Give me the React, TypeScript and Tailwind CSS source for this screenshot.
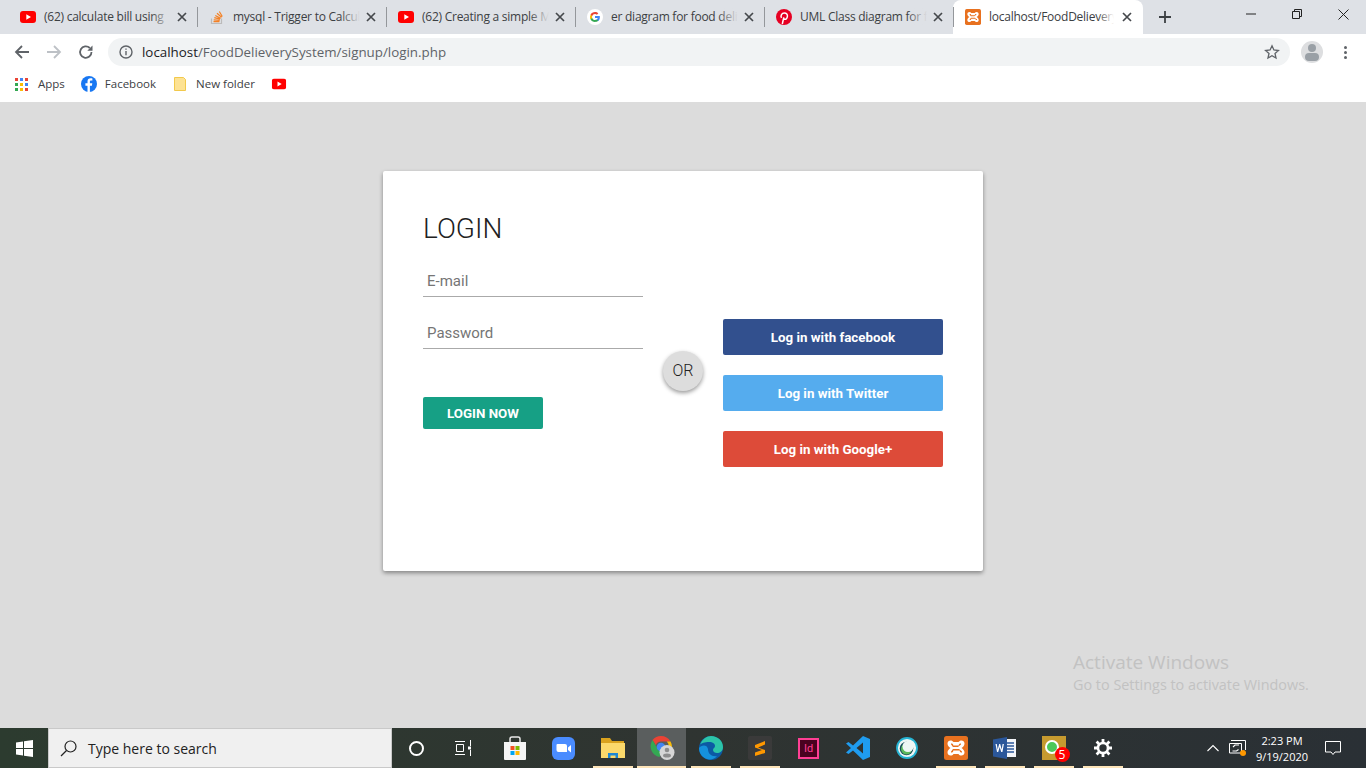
import React from 'react';

const uiFont = { fontFamily: '"Open Sans", "Noto Sans", sans-serif' };

const YoutubeIcon: React.FC = () => (
    <svg width="16" height="12" viewBox="0 0 16 12">
        <rect width="16" height="12" rx="3" fill="#f00" />
        <path d="M6.300 3.200 11 6l-4.700 2.800z" fill="#fff" />
    </svg>
);

const StackIcon: React.FC = () => (
    <svg width="16" height="16" viewBox="0 0 16 16" fill="none">
        <path d="M2.500 9.500v5h10v-5" stroke="#bcbbbb" strokeWidth="1.200" />
        <path d="M4.500 12.700h6M4.700 10.800l6 .6M5.300 8.700l5.800 1.500M6.300 6.500l5.300 2.900M8 4.300l4.600 4M10.300 2.500l3 5" stroke="#f48024" strokeWidth="1.200" />
    </svg>
);

const GoogleIcon: React.FC = () => (
    <svg width="16" height="16" viewBox="0 0 48 48">
        <circle cx="24" cy="24" r="24" fill="#fff" />
        <path d="M38.600 24.500c0-1.100-.1-2.200-.3-3.200H24v6h8.200c-.4 1.900-1.400 3.500-3 4.600v3.800h4.800c2.900-2.600 4.600-6.500 4.600-11.200z" fill="#4285f4" />
        <path d="M24 39c4 0 7.400-1.300 9.900-3.600l-4.800-3.800c-1.300.9-3 1.400-5.100 1.400-3.900 0-7.200-2.600-8.400-6.200h-5v3.900C13.100 35.700 18.200 39 24 39z" fill="#34a853" />
        <path d="M15.600 26.800a9 9 0 0 1 0-5.700v-3.900h-5a15 15 0 0 0 0 13.500z" fill="#fbbc05" />
        <path d="M24 15c2.200 0 4.200.8 5.700 2.200l4.300-4.300C31.400 10.500 28 9 24 9c-5.800 0-10.900 3.300-13.400 8.200l5 3.900C16.800 17.600 20.100 15 24 15z" fill="#ea4335" />
    </svg>
);

const PinterestIcon: React.FC = () => (
    <svg width="16" height="16" viewBox="0 0 16 16">
        <circle cx="8" cy="8" r="8" fill="#e60023" />
        <path d="M6.300 15 7.800 8.300M5.500 8.800C4.200 6.500 5.800 4 8.300 4c2.200 0 3.400 1.500 3.100 3.500-.3 1.900-1.500 3-2.700 2.800-.7-.1-1.100-.6-1.200-1" stroke="#fff" strokeWidth="1.500" fill="none" />
    </svg>
);

const XamppIcon: React.FC<{ size: number }> = ({ size }) => (
    <svg width={size} height={size} viewBox="0 0 24 24">
        <rect width="24" height="24" rx="2.500" fill="#e8711f" />
        <path
            d="M3.500 7.500C3.500 4 8 3.500 9.500 6h5C16 3.500 20.500 4 20.500 7.500c0 2-1.500 3.500-3 4.500 1.500 1 3 2.500 3 4.500 0 3.500-4.500 4-6 1.500h-5C8 20.500 3.500 20 3.500 16.500c0-2 1.500-3.500 3-4.500-1.500-1-3-2.500-3-4.500z"
            fill="#fff"
        />
        <path d="M7 7.500h.8c1 0 1.500 1 1.500 2h5.400c0-1 .5-2 1.500-2h.8v1c-1 .8-2 1.500-3 2.500H9c-1-1-1-1.700-2-2.500zM7 15.500c1-.8 1-1.500 2-2.500h6c1 1 2 1.700 3 2.500v1h-.8c-1 0-1.500-1-1.500-2H9.300c0 1-.5 2-1.500 2H7z" fill="#e8711f" />
    </svg>
);

const tabs = [
    { title: '(62) calculate bill using', icon: <YoutubeIcon /> },
    { title: 'mysql - Trigger to Calculate', icon: <StackIcon /> },
    { title: '(62) Creating a simple MVC', icon: <YoutubeIcon /> },
    { title: 'er diagram for food delivery', icon: <GoogleIcon /> },
    { title: 'UML Class diagram for food', icon: <PinterestIcon /> },
];

const CloseIcon: React.FC = () => (
    <svg width="10" height="10" viewBox="0 0 10 10" className="shrink-0">
        <path d="M1 1l8 8M9 1 1 9" stroke="#45484c" strokeWidth="1.700" />
    </svg>
);

const TabStrip: React.FC = () => (
    <div className="flex h-[34px] bg-[#dee1e6] pl-2 shrink-0">
        {tabs.map((tab) => (
            <div key={tab.title} className="flex items-center w-[189px] pl-3 pr-[10px] relative">
                <span className="w-4 h-4 flex items-center justify-center shrink-0">{tab.icon}</span>
                <div className="relative ml-2 w-[127px] overflow-hidden whitespace-nowrap text-[12px] tracking-[-0.25px] text-[#3c4043]">
                    {tab.title}
                    <div className="absolute top-0 right-0 h-full w-5 bg-gradient-to-r from-transparent to-[#dee1e6]" />
                </div>
                <span className="ml-auto"><CloseIcon /></span>
                <div className="absolute right-[-1px] top-[7px] h-[20px] w-px bg-[#94979b]" />
            </div>
        ))}
        <div className="flex items-center w-[190px] pl-3 pr-[11px] bg-white rounded-t-lg">
            <span className="w-4 h-4 shrink-0"><XamppIcon size={16} /></span>
            <div className="relative ml-2 w-[125px] overflow-hidden whitespace-nowrap text-[12px] tracking-[-0.25px] text-[#3c4043]">
                localhost/FoodDelievery
                <div className="absolute top-0 right-0 h-full w-4 bg-gradient-to-r from-transparent to-white" />
            </div>
            <span className="ml-auto"><CloseIcon /></span>
        </div>
        <div className="flex items-center ml-4">
            <svg width="12" height="12" viewBox="0 0 12 12"><path d="M6 0v12M0 6h12" stroke="#3c4043" strokeWidth="1.800" /></svg>
        </div>
        <div className="ml-auto flex h-[28px] items-center">
            <div className="w-[46px] flex justify-center">
                <svg width="10" height="10" viewBox="0 0 10 10"><path d="M0 5h10" stroke="#222" strokeWidth="1" /></svg>
            </div>
            <div className="w-[46px] flex justify-center">
                <svg width="10" height="10" viewBox="0 0 10 10" fill="none"><path d="M.5 2.500h7v7h-7zM2.500 2.500v-2h7v7h-2" stroke="#222" /></svg>
            </div>
            <div className="w-[46px] flex justify-center">
                <svg width="11" height="11" viewBox="0 0 11 11"><path d="M.5.500l10 10M10.500.500l-10 10" stroke="#222" /></svg>
            </div>
        </div>
    </div>
);

const Toolbar: React.FC = () => (
    <div className="flex items-center h-[34px] pt-[2px] bg-white shrink-0">
        <div className="w-[44px] flex justify-center">
            <svg width="16" height="16" viewBox="0 0 16 16" fill="none"><path d="M15 8H2M8 2 2 8l6 6" stroke="#5f6368" strokeWidth="1.800" /></svg>
        </div>
        <div className="w-[20px] flex justify-center">
            <svg width="16" height="16" viewBox="0 0 16 16" fill="none"><path d="M1 8h13M8 2l6 6-6 6" stroke="#bdc1c6" strokeWidth="1.800" /></svg>
        </div>
        <div className="w-[44px] flex justify-center">
            <svg width="16" height="16" viewBox="0 0 16 16" fill="none">
                <path d="M13.500 8A5.700 5.700 0 1 1 11.800 4" stroke="#5f6368" strokeWidth="1.800" />
                <path d="M14.500 1.500v5.200H9.300z" fill="#5f6368" />
            </svg>
        </div>
        <div className="flex items-center w-[1182px] h-[28px] rounded-full bg-[#f1f3f4] pl-[11px]">
            <svg width="14" height="14" viewBox="0 0 14 14" fill="none">
                <circle cx="7" cy="7" r="6" stroke="#5f6368" strokeWidth="1.400" />
                <path d="M7 6v4.200M7 3.500v1.300" stroke="#5f6368" strokeWidth="1.400" />
            </svg>
            <div className="ml-[9px] text-[13.350px] text-[#5f6368] whitespace-nowrap">
                <span className="text-[#202124]">localhost</span>/FoodDelieverySystem/signup/login.php
            </div>
            <svg width="16" height="16" viewBox="0 0 16 16" fill="none" className="ml-auto mr-[10px]">
                <path d="M8 1.800l1.900 4.200 4.500.5-3.400 3 1 4.500L8 11.700 4 14l1-4.500-3.400-3 4.500-.5z" stroke="#5f6368" strokeWidth="1.300" />
            </svg>
        </div>
        <div className="ml-[11px] w-[22px] h-[22px] rounded-full bg-[#dddee0] overflow-hidden flex flex-col items-center">
            <div className="w-[8px] h-[8px] rounded-full bg-[#9aa0a6] mt-[3px]" />
            <div className="w-[14px] h-[8px] rounded-full bg-[#9aa0a6] mt-px" />
        </div>
        <div className="ml-[21px] flex flex-col gap-[2px]">
            <div className="w-[3px] h-[3px] rounded-full bg-[#5f6368]" />
            <div className="w-[3px] h-[3px] rounded-full bg-[#5f6368]" />
            <div className="w-[3px] h-[3px] rounded-full bg-[#5f6368]" />
        </div>
    </div>
);

const appsColors = ['#ea4335', '#4285f4', '#ea4335', '#34a853', '#fbbc05', '#4285f4', '#34a853', '#fbbc05', '#ea4335'];

const BookmarksBar: React.FC = () => (
    <div className="flex items-center h-[34px] pb-[2px] bg-white text-[11.500px] text-[#3c4043] shrink-0 pl-[15px]">
        <div className="grid grid-cols-3 gap-[2px] w-[13px]">
            {appsColors.map((c, i) => (
                <div key={i} className="w-[3px] h-[3px]" style={{ backgroundColor: c }} />
            ))}
        </div>
        <span className="ml-[10px]">Apps</span>
        <svg width="16" height="16" viewBox="0 0 16 16" className="ml-4">
            <circle cx="8" cy="8" r="8" fill="#1877f2" />
            <path d="M8.900 16V9.800h2l.4-2.500H8.900V5.900c0-.8.300-1.300 1.300-1.300h1.200V2.400c-.4-.1-1.100-.2-1.800-.2-1.900 0-3.100 1.100-3.100 3.200v1.900H4.400v2.500h2.100V16z" fill="#fff" />
        </svg>
        <span className="ml-2">Facebook</span>
        <svg width="12" height="14" viewBox="0 0 12 14" className="ml-[18px]">
            <path d="M.5.500h9l2 2v11H.5z" fill="#fde293" stroke="#f2c94c" />
        </svg>
        <span className="ml-[10px]">New folder</span>
        <span className="ml-4 scale-90"><YoutubeIcon /></span>
    </div>
);

const socialButtons = [
    { label: 'Log in with facebook', color: 'bg-[#32508e]' },
    { label: 'Log in with Twitter', color: 'bg-[#55acee]' },
    { label: 'Log in with Google+', color: 'bg-[#dd4b39]' },
];

const LoginCard: React.FC = () => (
    <div
        className="relative mx-auto mt-[69px] w-[600px] h-[400px] bg-white rounded-[2px] shadow-[0_2px_4px_rgba(0,0,0,0.4)] flex pl-10 pt-[41px]"
        style={{ fontFamily: 'Roboto, sans-serif' }}
    >
        <div className="w-[220px]">
            <h1 className="text-[28px] leading-[34px] font-light text-[#212121]">LOGIN</h1>
            <div className="mt-[17px] h-[34px] border-b border-[#aaaaaa] px-1 text-[15px] leading-[36px] text-[#757575]">E-mail</div>
            <div className="mt-[18px] h-[34px] border-b border-[#aaaaaa] px-1 text-[15px] leading-[36px] text-[#757575]">Password</div>
            <button className="mt-[48px] w-[120px] h-[32px] pt-[2px] bg-[#16a085] rounded-[2px] text-white text-[13.330px] font-bold">LOGIN NOW</button>
        </div>
        <div className="w-[80px] flex justify-center pt-[139px]">
            <div className="w-10 h-10 rounded-full bg-[#dddddd] shadow-[0_2px_4px_rgba(0,0,0,0.4)] flex items-center justify-center text-[16px] font-light text-[#212121]">OR</div>
        </div>
        <div className="w-[220px] pt-[107px] flex flex-col gap-5">
            {socialButtons.map((b) => (
                <button key={b.label} className={`h-9 pt-[2px] rounded-[2px] text-white text-[13.330px] font-bold ${b.color}`}>{b.label}</button>
            ))}
        </div>
    </div>
);

const ChromeIcon = () => (
    <svg width="26" height="26" viewBox="0 0 26 26">
        <path d="M12 1a11 11 0 0 1 9.500 5.500H12a5.500 5.500 0 0 0-5.200 3.700L3.500 5A11 11 0 0 1 12 1z" fill="#ea4335" />
        <path d="M21.500 6.500A11 11 0 0 1 13 23l4.700-8a5.500 5.500 0 0 0 0-8.500z" fill="#fbbc05" />
        <path d="M3.500 5 8 12.700a5.500 5.500 0 0 0 5 3.800L10.500 22A11 11 0 0 1 3.500 5z" fill="#34a853" />
        <circle cx="12" cy="12" r="4.300" fill="#4285f4" />
        <circle cx="18" cy="17.500" r="7.500" fill="#d6d6d6" />
        <circle cx="18" cy="15" r="2.300" fill="#8d8d8d" />
        <ellipse cx="18" cy="20.500" rx="4" ry="2" fill="#8d8d8d" />
    </svg>
);

const taskIcons: { key: string; icon: React.ReactNode; active?: boolean; open?: boolean }[] = [
    {
        key: 'cortana',
        icon: <div className="w-[15px] h-[15px] rounded-full border-2 border-white" />,
    },
    {
        key: 'taskview',
        icon: (
            <svg width="17" height="16" viewBox="0 0 17 16" fill="none" stroke="#fff" className="mr-[4px]">
                <path d="M0 1.500h10M0 14.500h10M1.500 4.500h7v7h-7zM15.500 0v6M15.500 10v6" />
                <path d="M13 6.500h3v3h-3z" fill="#fff" stroke="none" />
            </svg>
        ),
    },
    {
        key: 'store',
        icon: (
            <svg width="24" height="25" viewBox="0 0 24 25">
                <path d="M7 6V3a2 2 0 0 1 2-2h6a2 2 0 0 1 2 2v3" fill="none" stroke="#e8e8e8" strokeWidth="1.500" />
                <path d="M1 6h22v17a1 1 0 0 1-1 1H2a1 1 0 0 1-1-1z" fill="#f5f5f5" />
                <rect x="7.500" y="10" width="4" height="4" fill="#f25022" />
                <rect x="12.500" y="10" width="4" height="4" fill="#7fba00" />
                <rect x="7.500" y="15" width="4" height="4" fill="#00a4ef" />
                <rect x="12.500" y="15" width="4" height="4" fill="#ffb900" />
            </svg>
        ),
    },
    {
        key: 'zoom',
        icon: (
            <svg width="23" height="23" viewBox="0 0 23 23">
                <rect width="23" height="23" rx="6" fill="#4a8cff" />
                <path d="M4.500 8a1 1 0 0 1 1-1h7.500a2 2 0 0 1 2 2v6h-8.500a2 2 0 0 1-2-2z" fill="#fff" />
                <path d="M16 10.500 19 8v7.500l-3-2.500z" fill="#fff" />
            </svg>
        ),
    },
    {
        key: 'explorer',
        open: true,
        icon: (
            <svg width="24" height="22" viewBox="0 0 24 22">
                <path d="M0 1h9l2 3h12v16H0z" fill="#d9a21e" />
                <path d="M0 6h24v15H0z" fill="#fbd96b" />
                <path d="M7 16h10v5h-2.500v-2.500h-5V21H7z" fill="#1e88d2" />
            </svg>
        ),
    },
    { key: 'chrome', active: true, open: true, icon: <ChromeIcon /> },
    {
        key: 'edge',
        open: true,
        icon: (
            <svg width="24" height="24" viewBox="0 0 24 24">
                <circle cx="12" cy="12" r="12" fill="#0c59a4" />
                <path d="M1 9C3 3 8 0 12 0c7 0 12 5 12 11 0 4-3 6-6 6-2 0-4-1-4-3 0-2 2-2 2-4s-2-4-6-4c-4 0-8 1-9 3z" fill="#2cc4a8" />
                <path d="M9 13c0 5 4 8 9 7-2 2.500-5 4-8 3.500C4 22.500 0 18 0 12c2-3 8-4 9 1z" fill="#1591dc" />
            </svg>
        ),
    },
    {
        key: 'sublime',
        open: true,
        icon: (
            <div className="w-6 h-6 rounded-[2px] bg-[#3a3a3a] flex items-center justify-center">
                <svg width="12" height="16" viewBox="0 0 12 16"><path d="M1 5l10-4v3.500L4 7.500l7 2.500v3L1 16v-3.500l7-2.500-7-2.500z" fill="#ff9800" /></svg>
            </div>
        ),
    },
    {
        key: 'indesign',
        icon: (
            <div className="w-[21px] h-[21px] border-2 border-[#ff3f94] bg-[#49021f] flex items-center justify-center text-[11px] leading-none text-[#ff3f94]" style={{ fontFamily: 'Roboto, sans-serif' }}>Id</div>
        ),
    },
    {
        key: 'vscode',
        icon: (
            <svg width="24" height="24" viewBox="0 0 24 24">
                <path d="M17 0 24 3v18l-7 3L7 14.500 2.500 18 0 16.500 5 12 0 7.500 2.500 6 7 9.500zM17 6.500 10.500 12l6.500 5.500z" fill="#1f9cf0" />
            </svg>
        ),
    },
    {
        key: 'webex',
        icon: (
            <svg width="22" height="22" viewBox="0 0 22 22">
                <circle cx="11" cy="11" r="10" fill="#eef6f5" stroke="#25b4d4" strokeWidth="1.800" />
                <circle cx="10.500" cy="11.500" r="6.800" fill="#16495a" />
                <circle cx="10.500" cy="12" r="5.500" fill="#5cb85c" />
                <circle cx="12" cy="9.500" r="5.500" fill="#eef6f5" />
            </svg>
        ),
    },
    { key: 'xampp', open: true, icon: <XamppIcon size={24} /> },
    {
        key: 'word',
        open: true,
        icon: (
            <svg width="23" height="22" viewBox="0 0 23 22">
                <rect x="8" y="2" width="15" height="18" fill="#f3f5f9" />
                <path d="M14 6h7M14 9h7M14 12h7M14 15h7" stroke="#2b579a" strokeWidth="1.500" />
                <path d="M0 2.500 14 0v22L0 19.500z" fill="#2b579a" />
                <path d="M2.500 7 4 15h1.200l1.500-5 1.500 5h1.200l1.500-8h-1.300l-.9 5.500L7.200 7H6.200l-1.500 5.500L3.800 7z" fill="#fff" />
            </svg>
        ),
    },
    {
        key: 'whatsapp',
        open: true,
        icon: (
            <div className="relative w-6 h-6 bg-[#c69a2f] flex items-center justify-center">
                <div className="w-[14px] h-[14px] rounded-full bg-[#4cc85a] border-2 border-white mr-[4px] mb-[2px]" />
                <div className="absolute right-[-4px] bottom-[-2px] w-[15px] h-[15px] rounded-full bg-[#f00] text-white text-[12px] leading-[15px] text-center">5</div>
            </div>
        ),
    },
    {
        key: 'settings',
        open: true,
        icon: (
            <svg width="18" height="18" viewBox="0 0 18 18" fill="none">
                <circle cx="9" cy="9" r="5" stroke="#fff" strokeWidth="2.600" />
                <path d="M9 0v4M9 14v4M0 9h4M14 9h4M2.600 2.600l2.800 2.800M12.600 12.600l2.800 2.800M2.600 15.400l2.800-2.800M12.600 5.400l2.800-2.800" stroke="#fff" strokeWidth="2.800" />
            </svg>
        ),
    },
];

const Taskbar: React.FC = () => (
    <div className="flex h-10 shrink-0 text-white bg-gradient-to-r from-[#2c3b2f] via-[#2f3431] to-[#2a3035]">
        <div className="w-[48px] flex items-center justify-center">
            <svg width="17" height="17" viewBox="0 0 17 17" fill="#fff">
                <path d="M0 2.500 7 1.500v6.500H0zM8 1.300 17 0v8H8zM0 9h7v6.500l-7-1zM8 9h9v8l-9-1.300z" />
            </svg>
        </div>
        <div className="w-[344px] bg-[#f0f0f0] border border-[#c9c9c9] flex items-center pl-[11px] text-[14px] text-[#222]" style={{ fontFamily: '"Open Sans", sans-serif' }}>
            <svg width="17" height="17" viewBox="0 0 17 17" fill="none" stroke="#222" strokeWidth="1.200">
                <circle cx="10.500" cy="6.500" r="5.500" />
                <path d="M6.500 10.500 1 16" />
            </svg>
            <span className="ml-[11px]">Type here to search</span>
        </div>
        {taskIcons.map((t) => (
            <div key={t.key} className={`relative w-[49px] flex items-center justify-center ${t.active ? 'bg-[#5a5e5e]' : ''}`}>
                {t.icon}
                {t.open && <div className={`absolute bottom-0 h-[2px] bg-[#fde4b8] ${t.active ? 'left-0 right-0' : 'left-[5px] right-[4px]'}`} />}
            </div>
        ))}
        <div className="ml-auto flex items-center">
            <svg width="12" height="8" viewBox="0 0 12 8" fill="none" stroke="#fff" strokeWidth="1.100"><path d="M.5 7 6 1.500 11.500 7" /></svg>
            <svg width="17" height="16" viewBox="0 0 17 16" fill="none" stroke="#fff" className="ml-[10px]">
                <path d="M2 .500h14.500V10M.5 3.500h12V13H.5z" />
                <path d="M4 7l2-2h4M9.500 9.500l-2 1.500H3.500" strokeWidth="1.100" />
                <circle cx="14" cy="13" r="3" fill="#ff9800" stroke="none" />
            </svg>
            <div className="ml-0 w-[72px] pt-[2px] text-center text-[11px] leading-[16px]" style={{ fontFamily: '"Open Sans", sans-serif' }}>
                <div>2:23 PM</div>
                <div>9/19/2020</div>
            </div>
            <svg width="16" height="16" viewBox="0 0 16 16" fill="none" stroke="#fff" className="ml-[7px] mr-[25px]">
                <path d="M.5 1.500h15v10.500h-5.500L8 14.500 6 12H.5z" />
            </svg>
        </div>
    </div>
);

export default function App() {
    return (
        <div className="relative flex flex-col w-full h-[768px] overflow-hidden bg-[#dcdcdc]" style={uiFont}>
            <TabStrip />
            <Toolbar />
            <BookmarksBar />
            <main className="flex-1">
                <LoginCard />
            </main>
            <Taskbar />
            <div className="absolute left-[1073px] top-[649px] text-[#c2c2c2]">
                <div className="text-[19px] leading-[26px]">Activate Windows</div>
                <div className="text-[14.400px] leading-[20px]">Go to Settings to activate Windows.</div>
            </div>
        </div>
    );
}
